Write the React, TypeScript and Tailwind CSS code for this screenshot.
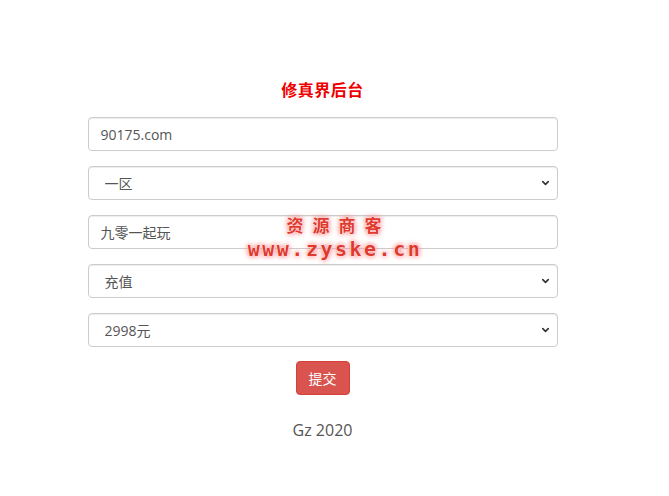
import { ChevronDown } from "lucide-react";

const font = "font-['Open_Sans','Noto_Sans_CJK_SC',sans-serif]";

function TextField({ value }: { value: string }) {
  return (
    <input
      type="text"
      defaultValue={value}
      className={`h-[34px] w-full rounded-[4px] border border-[#ccc] bg-white px-3 text-[14px] text-[#555] shadow-[inset_0_1px_1px_rgba(0,0,0,0.075)] outline-none ${font}`}
    />
  );
}

function SelectField({ options }: { options: string[] }) {
  return (
    <div className="relative w-full">
      <select
        defaultValue={options[0]}
        className={`h-[34px] w-full appearance-none rounded-[4px] border border-[#ccc] bg-white pl-4 pr-8 text-[14px] text-[#555] shadow-[inset_0_1px_1px_rgba(0,0,0,0.075)] outline-none ${font}`}
      >
        {options.map((o) => (
          <option key={o}>{o}</option>
        ))}
      </select>
      <ChevronDown
        strokeWidth={3.5}
        className="pointer-events-none absolute right-[7px] top-1/2 h-[11px] w-[11px] -translate-y-1/2 text-[#333]"
      />
    </div>
  );
}

export default function App() {
  return (
    <div className={`relative min-h-[496px] w-[669px] bg-white ${font}`}>
      <div className="mx-auto flex w-[470px] -translate-x-[12px] flex-col items-center pt-[79px]">
        <h1 className="text-[16px] font-bold leading-[22px] text-[#e00] tracking-[0.5px]">修真界后台</h1>

        <form className="mt-[16px] flex w-full flex-col gap-[15px]">
          <TextField value="90175.com" />
          <SelectField options={["一区", "二区", "三区"]} />
          <TextField value="九零一起玩" />
          <SelectField options={["充值", "邮件"]} />
          <SelectField options={["2998元", "998元", "648元"]} />
        </form>

        <button
          type="button"
          className="mt-[14px] h-[34px] w-[54px] rounded-[4px] border border-[#d43f3a] bg-[#d9534f] text-[14px] text-white"
        >
          提交
        </button>

        <p className="mt-[24px] text-[16px] leading-[22px] text-[#555]">Gz 2020</p>
      </div>

      {/* site stamp over the form */}
      <div className="pointer-events-none absolute left-[234px] top-[214px] flex w-[200px] flex-col items-center font-bold text-[#e0392e] [text-shadow:0_0_1px_#fff,0_0_2px_#fff,0_0_4px_#ff6a6a,0_0_6px_#ff9a9a]">
        <span className="text-[17px] leading-[24px] tracking-[9px] pl-[9px]">资源商客</span>
        <span className="font-['DejaVu_Sans_Mono',monospace] pl-[2px] text-[20px] leading-[22px] tracking-[2.5px]">www.zyske.cn</span>
      </div>
    </div>
  );
}
